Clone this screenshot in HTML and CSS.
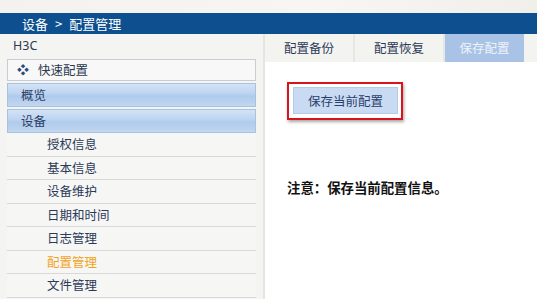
FILE: index.html
```html
<!DOCTYPE html>
<html>
<head>
<meta charset="utf-8">
<link rel="stylesheet" href="styles.css">
</head>
<body>
<div class="page">
  <div class="topstrip"></div>
  <div class="crumb">设备<span class="sep">&gt;</span>配置管理</div>
  <div class="main">
    <div class="sidebar">
      <div class="brand">H3C</div>
      <div class="quick"><span class="qicon">❖</span>快速配置</div>
      <div class="cat">概览</div>
      <div class="cat">设备</div>
      <div class="sub">授权信息</div>
      <div class="sub">基本信息</div>
      <div class="sub">设备维护</div>
      <div class="sub">日期和时间</div>
      <div class="sub">日志管理</div>
      <div class="sub active">配置管理</div>
      <div class="sub">文件管理</div>
    </div>
    <div class="content">
      <div class="tabs">
        <div class="tab">配置备份</div>
        <div class="tab">配置恢复</div>
        <div class="tab on">保存配置</div>
      </div>
      <div class="body">
        <div class="hl"><div class="btn">保存当前配置</div></div>
        <div class="note">注意：保存当前配置信息。</div>
      </div>
    </div>
  </div>
</div>
</body>
</html>
```

FILE: styles.css
```css
html, body { margin: 0; padding: 0; }
body { width: 537px; height: 299px; overflow: hidden; background: #fff;
  font-family: "Noto Sans CJK SC", "Noto Sans", sans-serif; }
.page { display: flex; flex-direction: column; height: 299px; }
.topstrip { height: 13px; background: linear-gradient(90deg, #f4f2ee 0%, #f7f6f3 60%, #f1efea 100%); }
.crumb { height: 21px; line-height: 21px; background: #0d4f8f; color: #fff; font-size: 13px; padding-left: 22px; }
.sep { margin: 0 7px; }
.main { flex: 1; display: flex; min-height: 0; }
.sidebar { width: 249px; padding: 0 7px; background: #f4f4f3; border-right: 2px solid #e6e6e0; flex: none; }
.brand { height: 25px; line-height: 24px; font-size: 12.5px; color: #2f3a4a; padding-left: 6px; font-family: "Noto Sans", sans-serif; }
.quick { height: 20px; line-height: 20px; border: 1px solid #c9cdd3; background: #f8f8f8; font-size: 12.5px; color: #2a3850; display: flex; align-items: center; }
.qicon { color: #2c4a7e; font-size: 12px; margin: 0 9px 0 9px; }
.cat { height: 22px; line-height: 22px; margin-top: 2px; border: 1px solid #a9c2e0; font-size: 12.5px; color: #2a3c62; padding-left: 13px;
  background: linear-gradient(180deg, #d3e3f7 0%, #bcd3f0 45%, #aecaec 55%, #c2d7f1 100%); }
.sub { height: 22.5px; line-height: 22.5px; border-bottom: 1px solid #d9d9d9; font-size: 12.5px; color: #2c3a58; padding-left: 40px; background: #f6f6f5; }
.sub.active { color: #f2a31c; }
.content { flex: 1; display: flex; flex-direction: column; }
.tabs { height: 28px; display: flex; background: #f3f3f0; }
.tab { width: 88px; line-height: 28px; text-align: center; font-size: 12.5px; color: #2c3a58; border-right: 2px solid #e8e8e3; }
.tab:first-child { width: 88px; }
.tab.on { width: 79px; background: #a8c3e6; color: #eef3fb; border-right: none; }
.body { flex: 1; background: #fff; padding: 20px 0 0 22px; }
.hl { display: inline-block; border: 2px solid #d8141c; padding: 3px 3px 4px 4px; box-shadow: 1px 2px 3px rgba(0,0,0,0.35); }
.btn { width: 103px; height: 25px; line-height: 25px; text-align: center; background: #c9daf3; border: 1px solid #b7cbe8; font-size: 12.5px; color: #2b3f6b; }
.note { margin-top: 57px; font-size: 13.4px; font-weight: bold; color: #111; }
```
